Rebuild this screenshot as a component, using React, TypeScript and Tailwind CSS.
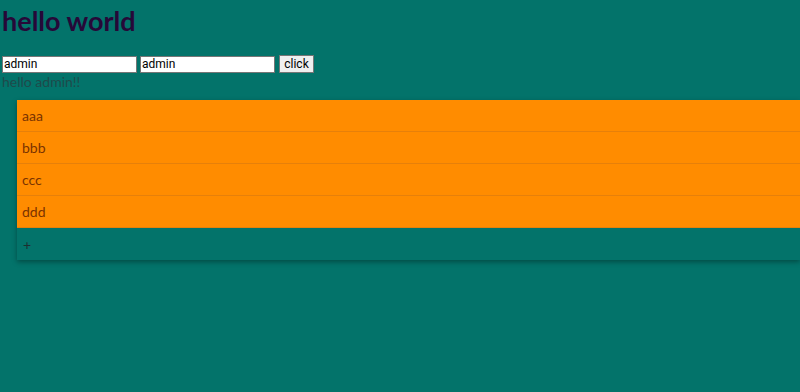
import React from "react";

export default function App() {
  const items = ["aaa", "bbb", "ccc", "ddd"];
  return (
    <div
      className="min-h-[392px] w-full bg-[#03736a] overflow-hidden"
      style={{ fontFamily: 'Lato, "Noto Sans", sans-serif' }}
    >
      <div className="pl-[2px] pt-[4px]">
        <h1 className="text-[27px] leading-[34px] font-bold text-[#260838]">hello world</h1>
      </div>
      <div className="mt-[17px] flex items-center pl-[2px] gap-[3px]">
        <input
          defaultValue="admin"
          className="w-[135px] h-[17px] bg-white border border-[#767676] text-[12px] leading-[15px] px-[1px] text-black outline-none"
          style={{ fontFamily: '"Roboto", "Liberation Sans", sans-serif' }}
        />
        <input
          defaultValue="admin"
          className="w-[135px] h-[17px] bg-white border border-[#767676] text-[12px] leading-[15px] px-[1px] text-black outline-none"
          style={{ fontFamily: '"Roboto", "Liberation Sans", sans-serif' }}
        />
        <button
          className="ml-[1px] w-[35px] h-[18px] bg-[#efefef] border border-[#767676] text-[12px] leading-[14px] text-black"
          style={{ fontFamily: '"Roboto", "Liberation Sans", sans-serif' }}
        >
          click
        </button>
      </div>
      <div className="pl-[2px] text-[14px] leading-[18px] text-[#1f4a4a]">hello admin!!</div>
      <div className="ml-[17px] mt-[9px] shadow-[0_2px_5px_rgba(0,0,0,0.35)]">
        {items.map((t) => (
          <div
            key={t}
            className="h-[32px] flex items-center pl-[5px] bg-[#ff8c00] border-b border-[#e6800a] text-[14px] text-[#7a3300]"
          >
            {t}
          </div>
        ))}
        <div className="h-[32px] flex items-center pl-[6px] bg-[#03736a] text-[14px] text-[#1e2e30]">+</div>
      </div>
    </div>
  );
}
